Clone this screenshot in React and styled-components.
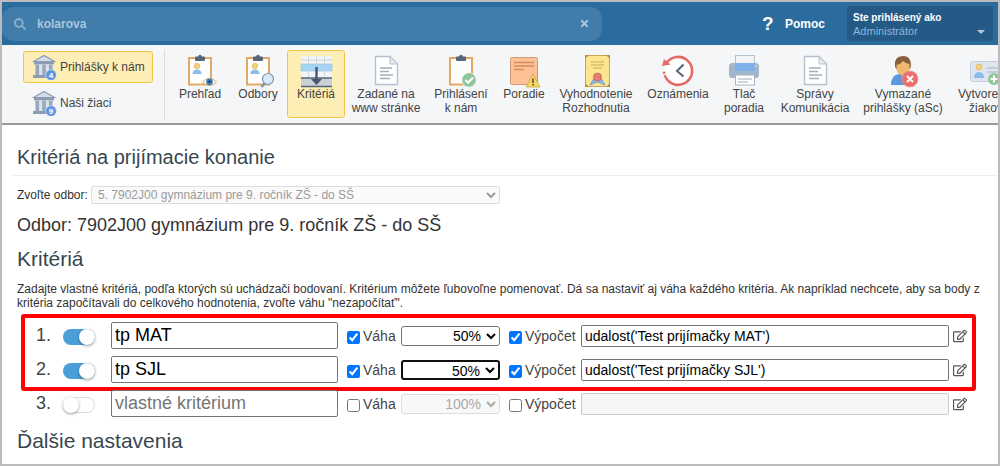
import React from 'react';
import styled, { createGlobalStyle } from 'styled-components';
import { FaSearch, FaTimes, FaRegEdit } from 'react-icons/fa';

const GlobalStyle = createGlobalStyle`
  html, body {
    margin: 0;
    padding: 0;
    background: #fff;
    overflow: hidden;
  }
  body {
    font-family: "Liberation Sans", Arial, sans-serif;
  }
`;

const Frame = styled.div`
  box-sizing: border-box;
  width: 1000px;
  height: 466px;
  border: 2px solid #bcbcbc;
  overflow: hidden;
  background: #fff;
`;

const Header = styled.header`
  display: flex;
  align-items: center;
  height: 43px;
  background: #2b6c9f;
`;

const SearchBox = styled.div`
  display: flex;
  align-items: center;
  box-sizing: border-box;
  width: 600px;
  height: 34px;
  padding: 0 12px 0 12px;
  background: #417cab;
  border-radius: 12px;
  color: #a9c6dc;
  font-size: 12px;
  font-weight: bold;
`;

const SearchText = styled.span`
  flex: 1;
  margin-left: 11px;
`;

const HelpLink = styled.div`
  display: flex;
  align-items: center;
  margin-left: 160px;
  color: #fff;
  font-size: 12px;
  font-weight: bold;
`;

const HelpMark = styled.span`
  width: 23px;
  font-size: 19px;
`;

const UserBox = styled.div`
  position: relative;
  box-sizing: border-box;
  width: 146px;
  height: 35px;
  margin-left: 22px;
  padding: 5px 6px;
  background: #255a87;
  border-radius: 3px;
`;

const UserTitle = styled.div`
  color: #fff;
  font-size: 10px;
  font-weight: bold;
  line-height: 13px;
`;

const UserName = styled.div`
  color: #8db7dc;
  font-size: 11px;
  line-height: 14px;
`;

const Caret = styled.span`
  position: absolute;
  right: 8px;
  bottom: 7px;
  border: 4px solid transparent;
  border-top: 4px solid #b7c6d3;
  border-bottom: 0;
`;

const Toolbar = styled.nav`
  display: flex;
  box-sizing: border-box;
  height: 80px;
  background: #f5f6f8;
  border-bottom: 2px solid #9b9b9b;
  overflow: hidden;
`;

const SideMenu = styled.div`
  display: flex;
  flex: none;
  flex-direction: column;
  box-sizing: border-box;
  width: 163px;
  height: 70px;
  margin-top: 5px;
  padding: 1px 11px 0 21px;
  border-right: 1px solid #dcdcdc;
`;

const SideButton = styled.div`
  display: flex;
  align-items: center;
  flex: none;
  box-sizing: border-box;
  height: 32px;
  margin-bottom: 4px;
  padding-left: 8px;
  color: #444;
  font-size: 12px;
  border: 1px solid ${props => (props.$active ? '#f5c445' : 'transparent')};
  border-radius: 3px;
  background: ${props => (props.$active ? '#fdeeb5' : 'transparent')};
`;

const ToolItems = styled.div`
  display: flex;
  flex: none;
  margin-left: 6px;
  padding-top: 5px;
`;

const ToolItem = styled.div`
  display: flex;
  flex: none;
  flex-direction: column;
  align-items: center;
  box-sizing: border-box;
  width: ${props => props.$width}px;
  height: 68px;
  padding-top: 3px;
  color: #444;
  font-size: 12px;
  line-height: 14px;
  text-align: center;
  white-space: nowrap;
  border: 1px solid ${props => (props.$active ? '#f5c445' : 'transparent')};
  border-radius: 3px;
  background: ${props => (props.$active ? '#fdeeb5' : 'transparent')};
`;

const ToolLabel = styled.div`
  margin-top: -1px;
`;

const Content = styled.main`
  padding: 0 0 0 15px;
  color: #333;
`;

const PageTitle = styled.h1`
  margin: 0 0 0 -4px;
  padding: 21px 0 6px 4px;
  font-size: 20px;
  font-weight: normal;
  line-height: 23px;
  color: #37474f;
  border-bottom: 1px solid #eee;
`;

const FieldRow = styled.div`
  display: flex;
  align-items: center;
  margin-top: 10px;
  font-size: 12px;
`;

const FieldLabel = styled.label`
  width: 74px;
  white-space: nowrap;
`;

const BranchSelect = styled.select`
  box-sizing: border-box;
  width: 409px;
  height: 18px;
  padding: 0 0 0 2px;
  font: 12px "Liberation Sans", Arial, sans-serif;
  color: #9a9a9a;
  background: #fafafa;
  border: 1px solid #ddd;
  border-radius: 2px;
  opacity: 1;
`;

const BranchTitle = styled.h2`
  margin: 10px 0 0;
  font-size: 18px;
  font-weight: normal;
  line-height: 22px;
  color: #333;
`;

const SectionTitle = styled.h3`
  margin: ${props => props.$top}px 0 0;
  font-size: 21px;
  font-weight: normal;
  line-height: 24px;
  color: #37474f;
`;

const Description = styled.p`
  margin: 11px 0 0;
  font-size: 12px;
  line-height: 14px;
  white-space: nowrap;
  color: #333;
`;

const Highlight = styled.div`
  box-sizing: border-box;
  width: 955px;
  height: 77px;
  margin: 4px 0 0 4px;
  padding: 1px 0 0;
  border: 4px solid #f00;
  border-radius: 3px;
`;

const CriteriaRow = styled.div`
  display: grid;
  grid-template-columns: 38px 32px 16px 227px 9px 13px 3px 34px 4px 99px 9px 13px 3px 52px 4px 368px 4px 16px;
  align-items: center;
  height: 34px;
  margin-left: ${props => (props.$outer ? '8px' : '0')};
  margin-top: ${props => (props.$outer ? '-4px' : '0')};
  font-size: 14px;
  color: #444;
`;

const RowNumber = styled.span`
  margin-top: -2px;
  padding-right: 12px;
  font-size: 18px;
  text-align: right;
`;

const Toggle = styled.span`
  position: relative;
  display: block;
  grid-column: 2;
  box-sizing: border-box;
  height: 16px;
  margin-top: 2px;
  border-radius: 8px;
  background: ${props => (props.$on ? '#4a9fd8' : '#fff')};
  border: ${props => (props.$on ? '0' : '1px solid #ddd')};

  &::after {
    content: '';
    position: absolute;
    top: ${props => (props.$on ? '0' : '-1px')};
    left: ${props => (props.$on ? '16px' : '-1px')};
    width: 16px;
    height: 16px;
    border-radius: 50%;
    background: #fff;
    box-shadow: 0 1px 3px rgba(0, 0, 0, 0.4);
  }
`;

const NameInput = styled.input`
  grid-column: 4;
  box-sizing: border-box;
  width: 227px;
  height: 27px;
  margin-top: -1px;
  padding: 0 3px;
  font: 18px "Liberation Sans", Arial, sans-serif;
  color: #000;
  border: 1px solid #767676;
  border-radius: 2px;
  outline: none;

  &::placeholder {
    color: #757575;
  }
`;

const Check = styled.input`
  grid-column: ${props => props.$column};
  width: 13px;
  height: 13px;
  margin: 3px 0 0;
`;

const CheckLabel = styled.span`
  grid-column: ${props => props.$column};
`;

const WeightSelect = styled.select`
  grid-column: 10;
  box-sizing: border-box;
  width: 99px;
  height: 20px;
  padding: 0 2px 0 0;
  font: 14px "Liberation Sans", Arial, sans-serif;
  text-align: right;
  text-align-last: right;
  color: ${props => (props.disabled ? '#aaa' : '#000')};
  background: ${props => (props.disabled ? '#f8f8f8' : '#fff')};
  border: ${props => (props.$focused ? '2px solid #101010' : props.disabled ? '1px solid #ddd' : '1px solid #767676')};
  border-radius: 3px;
  outline: none;
  opacity: 1;
`;

const FormulaInput = styled.input`
  grid-column: 16;
  box-sizing: border-box;
  width: 368px;
  height: 22px;
  padding: 0 3px;
  font: 14px "Liberation Sans", Arial, sans-serif;
  color: #000;
  background: ${props => (props.disabled ? '#f6f6f6' : '#fff')};
  border: 1px solid ${props => (props.disabled ? '#ccc' : '#767676')};
  border-radius: 2px;
  outline: none;
`;

const EditIcon = styled(FaRegEdit)`
  grid-column: 18;
  width: 14px;
  height: 14px;
  color: #555;
`;

const SearchIcon = styled(FaSearch)`
  width: 12px;
  height: 12px;
  color: #86aeca;
`;

const ClearIcon = styled(FaTimes)`
  width: 11px;
  height: 11px;
  color: #a9c6dc;
`;

const BankSvg = styled.svg`
  flex: none;
  margin-right: 3px;
`;

const Bank = ({ count }) => (
  <BankSvg width="25" height="26" viewBox="0 0 25 26">
    <path d="M1.5 7.5 L12 1.5 L22.5 7.5 Z" fill="#d5dde7" stroke="#8c9db3" strokeWidth="1.2" />
    <rect x="2" y="8" width="20" height="2.5" fill="#8c9db3" />
    <rect x="3" y="10.5" width="18" height="10.5" fill="#dbe2ea" />
    <rect x="3.5" y="10.5" width="3.6" height="10.5" fill="#98a9bd" />
    <rect x="10.2" y="10.5" width="3.6" height="10.5" fill="#98a9bd" />
    <rect x="16.9" y="10.5" width="3.6" height="10.5" fill="#98a9bd" />
    <rect x="1" y="21" width="22" height="3" fill="#8c9db3" />
    <circle cx="19" cy="21" r="5.4" fill="#5e97e0" stroke="#dfe9f5" strokeWidth="0.6" />
    <text x="19" y="24" fontSize="8" fontWeight="bold" fill="#fff" textAnchor="middle" fontFamily="Liberation Sans">{count}</text>
  </BankSvg>
);

// all toolbar icons share one 36x34 box, centred over the label
const ToolSvg = ({ children }) => (
  <svg width="36" height="34" viewBox="0 0 36 34" style={{ flex: 'none', overflow: 'visible' }}>
    {children}
  </svg>
);

const Clipboard = ({ children }) => (
  <ToolSvg>
    <rect x="7" y="4" width="22" height="26.5" fill="#fff" stroke="#e3a863" strokeWidth="2" />
    <rect x="13" y="2.5" width="10" height="4.5" rx="1" fill="#56657a" />
    <circle cx="18" cy="2.5" r="1.8" fill="#56657a" />
    {children}
  </ToolSvg>
);

const Person = () => (
  <g>
    <circle cx="15" cy="12" r="2.8" fill="#f3d27c" stroke="#d6a94c" strokeWidth="0.6" />
    <path d="M10.5 20 Q10.5 15.5 15 15.5 Q19.5 15.5 19.5 20 Z" fill="#8cbce8" />
  </g>
);

const PreviewIcon = () => (
  <Clipboard>
    <Person />
    <path d="M20.5 28 Q27.5 20.5 34.5 28 Q27.5 35 20.5 28 Z" fill="#fff" stroke="#d9b263" strokeWidth="1" />
    <circle cx="27.5" cy="27.8" r="3.4" fill="#3f7cc0" />
    <circle cx="27.5" cy="27.8" r="1.3" fill="#1f3d66" />
  </Clipboard>
);

const BranchIcon = () => (
  <Clipboard>
    <Person />
    <line x1="21.5" y1="33" x2="25" y2="29" stroke="#7d94a8" strokeWidth="2.4" />
    <circle cx="28" cy="25" r="5.5" fill="#d8eafa" stroke="#7d94a8" strokeWidth="1.2" />
  </Clipboard>
);

const TableIcon = () => (
  <ToolSvg>
    <rect x="3" y="2" width="31" height="31" fill="#f2f4f6" />
    <rect x="3" y="10" width="31" height="7" fill="#a6d4f2" stroke="#8fc3e4" strokeWidth="0.6" />
    <path d="M10.5 2 V10 M18.5 2 V10 M26.5 2 V10 M10.5 17 V24 M18.5 17 V24 M26.5 17 V24 M3 6 H34" stroke="#cdd4db" strokeWidth="1" />
    <rect x="3" y="24" width="31" height="9" fill="#c9d1d7" />
    <path d="M3 24 H34 M3 32.5 H34" stroke="#56657a" strokeWidth="1.6" />
    <path d="M18.5 13 V26" stroke="#47566a" strokeWidth="2.4" />
    <path d="M13 25 L18.5 31 L24 25 Z" fill="#47566a" />
  </ToolSvg>
);

const DocIcon = () => (
  <ToolSvg>
    <path d="M7.5 2.5 H22 L29.5 10 V30.5 H7.5 Z" fill="#fff" stroke="#b3c0ce" strokeWidth="1.4" />
    <path d="M22 2.5 V10 H29.5 Z" fill="#e8ecf0" stroke="#b3c0ce" strokeWidth="1" />
    <path d="M12 14 H24 M12 17.5 H21 M12 21 H25 M12 24.5 H22" stroke="#a3aeb9" strokeWidth="1.3" />
  </ToolSvg>
);

const SignedUpIcon = () => (
  <Clipboard>
    <circle cx="26" cy="26" r="7.2" fill="#8fc79a" stroke="#f5f6f8" strokeWidth="0.6" />
    <path d="M22.5 26 L25 28.8 L30 23.5" fill="none" stroke="#fff" strokeWidth="2" />
  </Clipboard>
);

const RankIcon = () => (
  <ToolSvg>
    <rect x="4.5" y="3.5" width="27" height="27" rx="1" fill="#fcc296" stroke="#cf9a78" strokeWidth="1" />
    <path d="M8 8.5 H28 M8 12 H28 M8 15.5 H18" stroke="#d88a58" strokeWidth="1.3" />
    <path d="M27 20 L34 33 H20 Z" fill="#f8d65f" stroke="#c9a843" strokeWidth="0.8" />
    <path d="M27 24.5 V29 M27 30 V31.5" stroke="#3f3f3f" strokeWidth="1.4" />
  </ToolSvg>
);

const DiplomaIcon = () => (
  <ToolSvg>
    <rect x="7.5" y="1.5" width="24" height="31" fill="#fbe58e" stroke="#cba552" strokeWidth="1" />
    <path d="M7 1 h4 l-4 4 Z M32 1 h-4 l4 4 Z M7 33 h4 l-4 -4 Z M32 33 h-4 l4 -4 Z" fill="#b8913f" />
    <path d="M13 8 H26 M13 11 H26 M15 14 H24" stroke="#cfae55" strokeWidth="1.2" />
    <path d="M15.5 25 L12 31 L19.5 28 L27 31 L23.5 25 Z" fill="#8fb8e0" stroke="#6f9bc8" strokeWidth="0.8" />
    <circle cx="19.5" cy="23" r="4" fill="#ea7b77" stroke="#c45e5a" strokeWidth="0.7" />
  </ToolSvg>
);

const ClockIcon = () => (
  <ToolSvg>
    <circle cx="18" cy="17" r="14.5" fill="#fff" />
    <path d="M6.5 9 A14 14 0 1 1 5.5 23" fill="none" stroke="#e56a66" strokeWidth="2.6" />
    <path d="M5.5 23 A14 14 0 0 1 4 17" fill="none" stroke="#e56a66" strokeWidth="2.6" strokeDasharray="2 1.5" />
    <path d="M23.5 10.5 L17 17 L23.5 22.5" fill="none" stroke="#56657a" strokeWidth="2" />
    <path d="M2 12 L4 5 L10.5 10.5 Z" fill="#e56a66" />
  </ToolSvg>
);

const PrinterIcon = () => (
  <ToolSvg>
    <rect x="9.5" y="1.5" width="19" height="10" fill="#f2f4f6" stroke="#b3c0ce" strokeWidth="1" />
    <rect x="3" y="9" width="30" height="15" rx="3.5" fill="#a3b5c8" />
    <rect x="9" y="9" width="20" height="8" fill="#7fb0ea" />
    <circle cx="30" cy="12" r="1" fill="#f3d27c" />
    <rect x="9.5" y="21" width="19" height="10" fill="#fff" stroke="#a3b5c8" strokeWidth="1" />
    <path d="M12 25 H26 M12 28 H22" stroke="#a3aeb9" strokeWidth="1.2" />
  </ToolSvg>
);

const DeletedIcon = () => (
  <ToolSvg>
    <path d="M6 31 Q6 21 14 20 L24 20 L28 31 Z" fill="#5e97e0" />
    <path d="M10 12 Q9 2 18 2 Q26 2 26 11 Q26 14 24.5 15 H11.5 Q10 14 10 12 Z" fill="#8a5f3c" />
    <path d="M11.5 11 Q16 10 18 7 Q21 10 24.5 10 V14 Q24.5 21 18 21.5 Q11.5 21 11.5 14 Z" fill="#efb86f" />
    <circle cx="25" cy="25" r="8" fill="#ea6f6d" stroke="#f29a98" strokeWidth="0.6" />
    <path d="M22 22 L28 28 M28 22 L22 28" stroke="#fff" strokeWidth="2" />
  </ToolSvg>
);

const CreateIcon = () => (
  <ToolSvg>
    <rect x="2.5" y="7.5" width="32" height="20" rx="2" fill="#dfe6ef" stroke="#c3cfdc" strokeWidth="1" />
    <circle cx="11" cy="13" r="3" fill="#f3d27c" stroke="#d6a94c" strokeWidth="0.6" />
    <path d="M6 24 Q6 18 11 18 Q16 18 16 24 Z" fill="#8cbce8" />
    <path d="M19 14 H31 M19 18 H31" stroke="#b9c5d2" strokeWidth="1.5" />
    <circle cx="26" cy="25" r="6" fill="#8fc79a" />
    <path d="M26 21.5 V28.5 M22.5 25 H29.5" stroke="#fff" strokeWidth="2" />
  </ToolSvg>
);

const tools = [
  { width: 58, icon: <PreviewIcon />, label: ['Prehľad'] },
  { width: 58, icon: <BranchIcon />, label: ['Odbory'] },
  { width: 58, icon: <TableIcon />, label: ['Kritériá'], active: true },
  { width: 82, icon: <DocIcon />, label: ['Zadané na', 'www stránke'] },
  { width: 68, icon: <SignedUpIcon />, label: ['Prihlásení', 'k nám'] },
  { width: 58, icon: <RankIcon />, label: ['Poradie'] },
  { width: 86, icon: <DiplomaIcon />, label: ['Vyhodnotenie', 'Rozhodnutia'] },
  { width: 78, icon: <ClockIcon />, label: ['Oznámenia'] },
  { width: 54, icon: <PrinterIcon />, label: ['Tlač', 'poradia'] },
  { width: 88, icon: <DocIcon />, label: ['Správy', 'Komunikácia'] },
  { width: 88, icon: <DeletedIcon />, label: ['Vymazané', 'prihlášky (aSc)'] },
  { width: 78, icon: <CreateIcon />, label: ['Vytvorenie', 'žiakov'] },
];

const Criterion = ({ index, name, on, formula, focused, outer }) => (
  <CriteriaRow $outer={outer}>
    <RowNumber>{index}.</RowNumber>
    <Toggle $on={on} />
    {on ? <NameInput defaultValue={name} /> : <NameInput placeholder={name} />}
    <Check type="checkbox" $column={6} defaultChecked={on} />
    <CheckLabel $column={8}>Váha</CheckLabel>
    <WeightSelect $focused={focused} disabled={!on} defaultValue={on ? '50' : '100'}>
      <option value="50">50%</option>
      <option value="100">100%</option>
    </WeightSelect>
    <Check type="checkbox" $column={12} defaultChecked={on} />
    <CheckLabel $column={14}>Výpočet</CheckLabel>
    <FormulaInput disabled={!on} defaultValue={formula} />
    <EditIcon />
  </CriteriaRow>
);

export default function App() {
  return (
    <>
      <GlobalStyle />
      <Frame>
        <Header>
          <SearchBox>
            <SearchIcon />
            <SearchText>kolarova</SearchText>
            <ClearIcon />
          </SearchBox>
          <HelpLink>
            <HelpMark>?</HelpMark>
            Pomoc
          </HelpLink>
          <UserBox>
            <UserTitle>Ste prihlásený ako</UserTitle>
            <UserName>Administrátor</UserName>
            <Caret />
          </UserBox>
        </Header>
        <Toolbar>
          <SideMenu>
            <SideButton $active><Bank count="4" />Prihlášky k nám</SideButton>
            <SideButton><Bank count="9" />Naši žiaci</SideButton>
          </SideMenu>
          <ToolItems>
            {tools.map(tool => (
              <ToolItem key={tool.label[0]} $width={tool.width} $active={tool.active}>
                {tool.icon}
                <ToolLabel>
                  {tool.label.map(line => <div key={line}>{line}</div>)}
                </ToolLabel>
              </ToolItem>
            ))}
          </ToolItems>
        </Toolbar>
        <Content>
          <PageTitle>Kritériá na prijímacie konanie</PageTitle>
          <FieldRow>
            <FieldLabel>Zvoľte odbor:</FieldLabel>
            <BranchSelect disabled>
              <option>5. 7902J00 gymnázium pre 9. ročník ZŠ - do SŠ</option>
            </BranchSelect>
          </FieldRow>
          <BranchTitle>Odbor: 7902J00 gymnázium pre 9. ročník ZŠ - do SŠ</BranchTitle>
          <SectionTitle $top={11}>Kritériá</SectionTitle>
          <Description>
            Zadajte vlastné kritériá, podľa ktorých sú uchádzači bodovaní. Kritérium môžete ľubovoľne pomenovať. Dá sa nastaviť aj váha každého kritéria. Ak napríklad nechcete, aby sa body z
            <br />
            kritéria započítavali do celkového hodnotenia, zvoľte váhu "nezapočítať".
          </Description>
          <Highlight>
            <Criterion index={1} name="tp MAT" on formula="udalost('Test prijímačky MAT')" />
            <Criterion index={2} name="tp SJL" on focused formula="udalost('Test prijímačky SJL')" />
          </Highlight>
          <Criterion outer index={3} name="vlastné kritérium" formula="" />
          <SectionTitle $top={8}>Ďalšie nastavenia</SectionTitle>
        </Content>
      </Frame>
    </>
  );
}
